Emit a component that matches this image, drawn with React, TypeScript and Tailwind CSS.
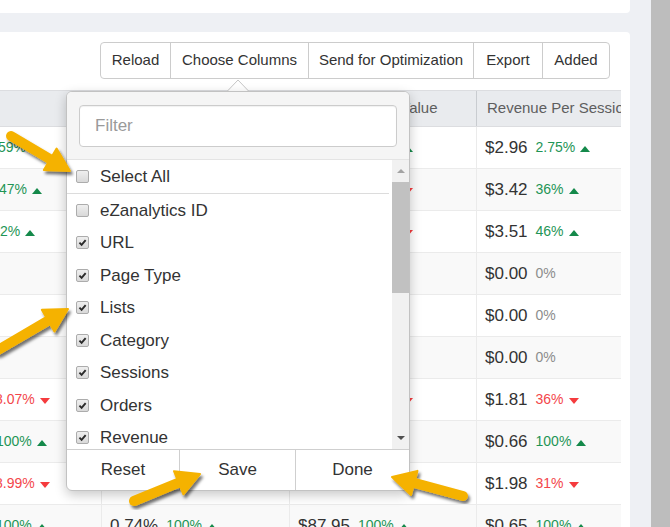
import React from 'react';

type Trend = 'up' | 'down' | 'flat';

interface Stat {
  value?: string;
  pct: string;
  trend: Trend;
  shift?: string;
}

interface Row {
  c1?: Stat;
  c2?: Stat;
  c3?: Stat;
  c4: Stat;
}

const ROWS: Row[] = [
  { c1: { pct: '59%', trend: 'up', shift: 'ml-[-10px]' }, c2: { value: '1.12%', pct: '5.4%', trend: 'up' }, c3: { value: '$58.37', pct: '12.5%', trend: 'up' }, c4: { value: '$2.96', pct: '2.75%', trend: 'up' } },
  { c1: { pct: '47%', trend: 'up', shift: 'ml-[-9px]' }, c2: { value: '0.98%', pct: '8.1%', trend: 'up' }, c3: { value: '$61.20', pct: '18.2%', trend: 'down' }, c4: { value: '$3.42', pct: '36%', trend: 'up' } },
  { c1: { pct: '2%', trend: 'up', shift: 'ml-[-8px]' }, c2: { value: '1.04%', pct: '3.3%', trend: 'up' }, c3: { value: '$59.03', pct: '10.4%', trend: 'down' }, c4: { value: '$3.51', pct: '46%', trend: 'up' } },
  { c2: { value: '0.00%', pct: '0%', trend: 'flat' }, c3: { value: '$0.00', pct: '0%', trend: 'flat' }, c4: { value: '$0.00', pct: '0%', trend: 'flat' } },
  { c2: { value: '0.00%', pct: '0%', trend: 'flat' }, c3: { value: '$0.00', pct: '0%', trend: 'flat' }, c4: { value: '$0.00', pct: '0%', trend: 'flat' } },
  { c2: { value: '0.00%', pct: '0%', trend: 'flat' }, c3: { value: '$0.00', pct: '0%', trend: 'flat' }, c4: { value: '$0.00', pct: '0%', trend: 'flat' } },
  { c1: { pct: '8.07%', trend: 'down', shift: 'ml-[-13px]' }, c2: { value: '0.55%', pct: '9.2%', trend: 'down' }, c3: { value: '$47.77', pct: '21.6%', trend: 'down' }, c4: { value: '$1.81', pct: '36%', trend: 'down' } },
  { c1: { pct: '100%', trend: 'up', shift: 'ml-[-12px]' }, c2: { value: '0.61%', pct: '100%', trend: 'up' }, c3: { value: '$39.59', pct: '100%', trend: 'up' }, c4: { value: '$0.66', pct: '100%', trend: 'up' } },
  { c1: { pct: '8.99%', trend: 'down', shift: 'ml-[-13px]' }, c2: { value: '0.47%', pct: '4.6%', trend: 'down' }, c3: { value: '$75.34', pct: '100%', trend: 'down' }, c4: { value: '$1.98', pct: '31%', trend: 'down' } },
  { c1: { pct: '100%', trend: 'up', shift: 'ml-[-12px]' }, c2: { value: '0.74%', pct: '100%', trend: 'up' }, c3: { value: '$87.95', pct: '100%', trend: 'up' }, c4: { value: '$0.65', pct: '100%', trend: 'up' } },
];

const COLUMNS: [string, boolean][] = [
  ['eZanalytics ID', false],
  ['URL', true],
  ['Page Type', true],
  ['Lists', true],
  ['Category', true],
  ['Sessions', true],
  ['Orders', true],
  ['Revenue', true],
  ['Revenue Per Session', true],
];

const TOOLBAR = [
  ['Reload', 'w-[70px]'],
  ['Choose Columns', 'w-[138px]'],
  ['Send for Optimization', 'w-[165px]'],
  ['Export', 'w-[69px]'],
  ['Added', 'w-[66px]'],
];

function Tri({ trend }: { trend: Trend }) {
  if (trend === 'flat') return null;
  if (trend === 'up') {
    return <span className="ml-[5px] mt-[3px] inline-block h-0 w-0 border-x-[5px] border-b-[6px] border-x-transparent border-b-[#14894a]" />;
  }
  return <span className="ml-[5px] mt-[3px] inline-block h-0 w-0 border-x-[5px] border-t-[6px] border-x-transparent border-t-[#f53b3e]" />;
}

function Cell({ stat, last }: { stat?: Stat; last?: boolean }) {
  const pctColor =
    stat?.trend === 'up' ? 'text-[#1f9556]' : stat?.trend === 'down' ? 'text-[#f3464b]' : 'text-[#8c8c8c]';
  return (
    <div className={`flex items-center overflow-hidden whitespace-nowrap pl-2 ${last ? '' : 'border-r border-[#ebebeb]'}`}>
      {stat && (
        <div className={`flex shrink-0 items-center ${stat.shift ?? ''}`}>
          {stat.value && <span className="mr-2 text-[17px] text-[#333]">{stat.value}</span>}
          <span className={`text-[14px] ${pctColor}`}>{stat.pct}</span>
          <Tri trend={stat.trend} />
        </div>
      )}
    </div>
  );
}

function Check({ checked }: { checked: boolean }) {
  return (
    <span className="flex h-[13px] w-[13px] shrink-0 items-center justify-center rounded-[2px] border border-[#acacac] bg-linear-to-b from-[#efefef] to-[#d9d9d9]">
      {checked && (
        <svg viewBox="0 0 10 10" className="h-[9px] w-[9px]">
          <path d="M1.6 5.2 L4 7.6 L8.5 2.3" fill="none" stroke="#2b2b2b" strokeWidth="2.1" />
        </svg>
      )}
    </span>
  );
}

function Arrow({ x1, y1, x2, y2 }: { x1: number; y1: number; x2: number; y2: number }) {
  const dx = x2 - x1;
  const dy = y2 - y1;
  const len = Math.hypot(dx, dy);
  const ux = dx / len;
  const uy = dy / len;
  const head = 23;
  const half = 12.5;
  const bx = x2 - ux * head;
  const by = y2 - uy * head;
  const pts = `${x2},${y2} ${bx - uy * half},${by + ux * half} ${bx + uy * half},${by - ux * half}`;
  return (
    <g filter="url(#arrowShadow)">
      <line x1={x1} y1={y1} x2={bx + ux * 2} y2={by + uy * 2} stroke="#f5b206" strokeWidth="10" strokeLinecap="round" />
      <polygon points={pts} fill="#f5b206" stroke="#f5b206" strokeWidth="2" strokeLinejoin="round" />
    </g>
  );
}

function ColumnPicker() {
  return (
    <>
      <svg className="absolute left-[226px] top-[47px] z-10" width="24" height="13" viewBox="0 0 24 13">
        <polygon points="0.5,13 12,1 23.5,13" fill="#fff" stroke="#c6c6c6" />
      </svg>
      <div className="absolute left-[66px] top-[59px] z-10 flex h-[400px] w-[344px] flex-col overflow-hidden rounded-[6px] border border-[#c2c2c2] bg-white shadow-[0_4px_12px_rgba(0,0,0,0.22)]">
        <div className="h-[68px] border-b border-[#e4e4e4] bg-[#f5f5f5] px-[12px] pt-[13px]">
          <input
            readOnly
            placeholder="Filter"
            className="h-[42px] w-full rounded-[4px] border border-[#cccccc] bg-white pl-[15px] text-[17px] text-[#333] shadow-[inset_0_1px_1px_rgba(0,0,0,0.06)] outline-none placeholder:text-[#9a9a9a]"
          />
        </div>
        <div className="flex h-[289px]">
          <div className="flex-1 overflow-hidden">
            <div className="mr-[3px] flex h-[34px] items-center gap-[11px] border-b border-[#dcdcdc] pl-[9px] text-[17px] text-[#333]">
              <Check checked={false} />
              <span>Select All</span>
            </div>
            {COLUMNS.map(([label, checked]) => (
              <div key={label} className="flex h-[32.5px] items-center gap-[11px] pl-[9px] text-[17px] text-[#333]">
                <Check checked={checked} />
                <span>{label}</span>
              </div>
            ))}
          </div>
          <div className="flex w-[17px] flex-col items-center bg-[#f1f1f1]">
            <span className="mt-[9px] h-0 w-0 border-x-[4px] border-b-[4px] border-x-transparent border-b-[#a3a3a3]" />
            <div className="mt-[9px] h-[111px] w-full bg-[#c1c1c1]" />
            <div className="flex-1" />
            <span className="mb-[9px] h-0 w-0 border-x-[4px] border-t-[4px] border-x-transparent border-t-[#505050]" />
          </div>
        </div>
        <div className="flex h-[41px] divide-x divide-[#cfcfcf] border-t border-[#cfcfcf] text-[17px] text-[#333]">
          <div className="flex w-[113px] items-center justify-center">Reset</div>
          <div className="flex w-[116px] items-center justify-center">Save</div>
          <div className="flex flex-1 items-center justify-center">Done</div>
        </div>
      </div>
    </>
  );
}

export default function App() {
  return (
    <div className="relative grid h-[527px] w-[670px] grid-cols-[630px_21px_19px] overflow-hidden bg-[#eef0f4] font-['Liberation_Sans',Arial,sans-serif]">
      <div className="flex min-w-0 flex-col">
        <div className="h-[13px] rounded-br-[4px] bg-white" />
        <div className="relative mt-[19px] flex-1 overflow-hidden rounded-tr-[4px] bg-white">
          <div className="flex justify-end pr-[20px] pt-[10px]">
            <div className="flex h-[37px] divide-x divide-[#cccccc] rounded-[4px] border border-[#cccccc] text-[15px] text-[#333]">
              {TOOLBAR.map(([label, w]) => (
                <div key={label} className={`flex items-center justify-center ${w}`}>
                  {label}
                </div>
              ))}
            </div>
          </div>

          <div className="mt-[11px] w-[621px] overflow-hidden">
            <div className="grid h-[37px] grid-cols-[102px_188px_187px_160px] border-y border-[#dcdde0] bg-[#e9ebee] text-[15px] text-[#5e5e5e]">
              <div className="border-r border-[#c9ccd0]" />
              <div className="flex items-center border-r border-[#c9ccd0] pl-[10px]">Conversion Rate</div>
              <div className="flex items-center whitespace-nowrap border-r border-[#c9ccd0] pl-[8px]">Average Order Value</div>
              <div className="flex items-center whitespace-nowrap pl-[10px]">Revenue Per Session</div>
            </div>
            {ROWS.map((r, i) => (
              <div
                key={i}
                className={`grid h-[42px] grid-cols-[102px_188px_187px_160px] border-b border-[#ebebeb] ${i % 2 ? 'bg-[#f9f9f9]' : 'bg-white'}`}
              >
                <Cell stat={r.c1} />
                <Cell stat={r.c2} />
                <Cell stat={r.c3} />
                <Cell stat={r.c4} last />
              </div>
            ))}
          </div>

          <ColumnPicker />
        </div>
      </div>
      <div />
      <div className="bg-[#bdbdbd]" />

      <svg className="pointer-events-none absolute inset-0 z-20" width="670" height="527" viewBox="0 0 670 527">
        <defs>
          <filter id="arrowShadow" x="-20%" y="-20%" width="150%" height="150%">
            <feDropShadow dx="2" dy="3" stdDeviation="1.6" floodColor="#000" floodOpacity="0.55" />
          </filter>
        </defs>
        <Arrow x1={11} y1={136} x2={70} y2={171} />
        <Arrow x1={-2} y1={350} x2={68} y2={309} />
        <Arrow x1={134} y1={501} x2={200} y2={474} />
        <Arrow x1={463} y1={496} x2={392} y2={477} />
      </svg>
    </div>
  );
}
